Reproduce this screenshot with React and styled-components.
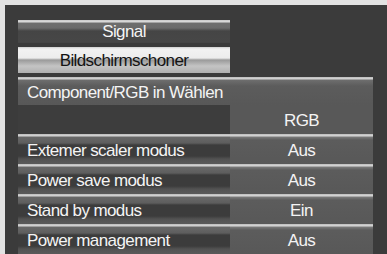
import React from 'react'
import styled, { createGlobalStyle } from 'styled-components'

const Global = createGlobalStyle`
  html, body {
    margin: 0;
    padding: 0;
    background: #e2e2e2;
    overflow: hidden;
  }
`

const Screen = styled.div`
  margin: 5px 0 0 5px;
  height: 249px;
  background: #3b3b3b;
  padding: 15px 14px 0 13px;
  box-sizing: border-box;
  font-family: "Liberation Sans", Arial, sans-serif;
  font-size: 17px;
  letter-spacing: -0.6px;
  color: #f4f4f4;
  display: flex;
  flex-direction: column;
  overflow: hidden;
`

const Tab = styled.div`
  width: 212px;
  height: ${({ tall }) => tall ? 29 : 25}px;
  margin-bottom: 4px;
  display: flex;
  align-items: center;
  justify-content: center;
  padding-top: 2px;
  box-sizing: border-box;
  color: ${({ active }) => active ? '#141414' : '#f4f4f4'};
  background: ${({ active }) => active
    ? 'linear-gradient(#d0d0d0 0, #f2f2f2 2px, #ececec 11px, #9a9a9a 13px, #c4c4c4 19px, #b0b0b0 26px, #6a6a6a 29px)'
    : 'linear-gradient(#c8c8c8 0, #dcdcdc 2px, #6e6e6e 3px, #6a6a6a 8px, #454545 11px, #474747 22px, #3b3b3b 25px)'};
`

const Row = styled.div`
  display: grid;
  grid-template-columns: 212px 1fr;
  height: ${({ h }) => h || 30}px;
  flex-shrink: 0;
`

const Label = styled.div`
  display: flex;
  align-items: center;
  padding: 3px 0 0 9px;
  box-sizing: border-box;
  background: linear-gradient(#bcbcbc 0, #d6d6d6 2px, #686868 3px, #5e5e5e 9px, #3c3c3c 11px, #3c3c3c 22px, #525252 25px, #5a5a5a 30px);
`

const WideLabel = styled(Label)`
  grid-column: 1 / span 2;
  background: linear-gradient(#bcbcbc 0, #d6d6d6 2px, #6e6e6e 3px, #5c5c5c 9px, #585858 28px);
`

const Blank = styled.div`
  background: #3d3d3d;
`

const Value = styled.div`
  display: flex;
  align-items: center;
  justify-content: center;
  padding-top: 3px;
  box-sizing: border-box;
  background: ${({ plain }) => plain
    ? '#585858'
    : 'linear-gradient(#bcbcbc 0, #d8d8d8 2px, #7a7a7a 3px, #5c5c5c 6px, #585858 30px)'};
`

const items = [
  ['Extemer scaler modus', 'Aus'],
  ['Power save modus', 'Aus'],
  ['Stand by modus', 'Ein'],
  ['Power management', 'Aus'],
]

export default function App() {
  return (
    <>
      <Global />
      <Screen>
        <Tab>Signal</Tab>
        <Tab tall active>Bildschirmschoner</Tab>
        <Row h={28}>
          <WideLabel>Component/RGB in Wählen</WideLabel>
        </Row>
        <Row h={29}>
          <Blank />
          <Value plain>RGB</Value>
        </Row>
        {items.map(([label, value]) => (
          <Row key={label}>
            <Label>{label}</Label>
            <Value>{value}</Value>
          </Row>
        ))}
      </Screen>
    </>
  )
}
